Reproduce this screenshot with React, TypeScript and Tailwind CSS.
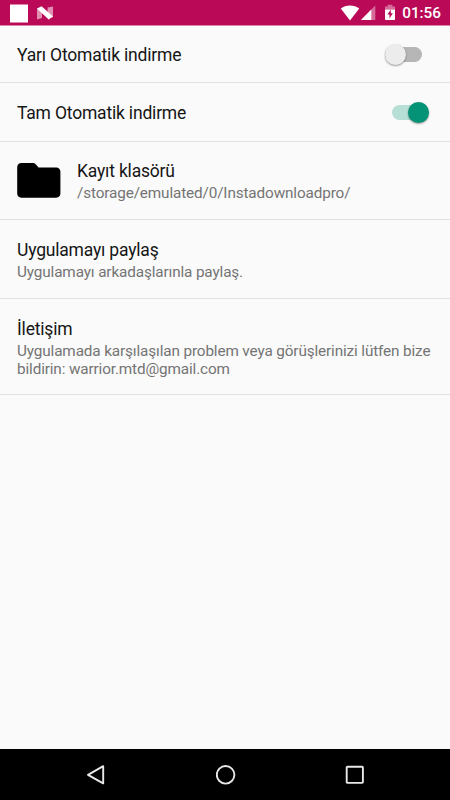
import React, { useState } from 'react';

const StatusBar = () => (
  <header className="flex h-[26px] shrink-0 items-center border-b border-[#dd86ab] bg-[#ba0a57]">
    <div className="ml-[10px] size-[18px] translate-y-[0.5px] bg-white" />
    <svg className="ml-[9px] mt-px" width="16" height="14" viewBox="0 0 16 14">
      <path d="M0 2.2 5 5v7L0 13.4ZM16 11.4 10.6 8.6V1.4L16 .4Z" fill="#fff" fillOpacity=".55" />
      <path d="M0 2.4 4.6.2 16 10.4l-4.3 3.2Z" fill="#fff" />
    </svg>
    <div className="ml-auto mr-[9px] flex items-center">
      <svg className="mt-px" width="20" height="16" viewBox="0 0 20 16">
        <path d="M.8 3.4C5.8-.5 14.2-.5 19.2 3.4L10 15.4Z" fill="#fff" />
      </svg>
      <svg className="mt-px" width="16" height="16" viewBox="0 0 16 16">
        <path d="M1 15 15.3.5V15Z" fill="#fff" fillOpacity=".4" />
        <path d="M1 15 11.3 4.6V15Z" fill="#fff" />
      </svg>
      <svg className="ml-[8px] mt-px" width="12" height="17" viewBox="0 0 12 17">
        <path d="M1 5.5V2.4h2.6V.8h4.8v1.6H11v3.1Z" fill="#fff" fillOpacity=".4" />
        <path
          d="M1 5.5h10v9.7a.8.8 0 0 1-.8.8H1.8a.8.8 0 0 1-.8-.8ZM6.8 5.4 3.4 10.5h2.1v4L8.8 9.2h-2Z"
          fill="#fff"
          fillRule="evenodd"
        />
      </svg>
      <span className="ml-[6px] mt-[3px] text-[15.3px] leading-none font-medium text-white">01:56</span>
    </div>
  </header>
);

const Toggle = ({ checked, onChange }: { checked: boolean; onChange: () => void }) => (
  <button
    type="button"
    role="switch"
    aria-checked={checked}
    onClick={onChange}
    className={`flex h-[15px] w-[37px] shrink-0 items-center rounded-full ${
      checked ? 'justify-end bg-[#b7dfd5]' : 'bg-[#b6b6b6]'
    }`}
  >
    <span
      className={`size-[21px] shrink-0 rounded-full shadow-[0_1px_2px_rgba(0,0,0,0.4)] ${
        checked ? 'bg-[#059378]' : 'bg-[#ececec]'
      }`}
    />
  </button>
);

const Title = ({ children }: { children: React.ReactNode }) => (
  <h2 className="text-[17.5px] leading-[22px] tracking-[-0.19px] text-[#151515]">{children}</h2>
);

const Summary = ({ children }: { children: React.ReactNode }) => (
  <p className="mt-[2px] text-[15.3px] leading-[18px] tracking-[-0.13px] text-[#747474]">{children}</p>
);

const App = () => {
  const [semiAuto, setSemiAuto] = useState(false);
  const [fullAuto, setFullAuto] = useState(true);

  return (
    <div className="flex h-[800px] w-[450px] flex-col overflow-hidden bg-[#fafafa] font-['Roboto',sans-serif]">
      <StatusBar />

      <main className="flex-1">
        <div className="flex h-[57px] items-center justify-between border-b border-[#e0e0e0] pl-[17px] pr-[28px] pt-px">
          <Title>Yarı Otomatik indirme</Title>
          <Toggle checked={semiAuto} onChange={() => setSemiAuto(!semiAuto)} />
        </div>

        <div className="flex h-[59px] items-center justify-between border-b border-[#e0e0e0] pl-[17px] pr-[21px] pt-px">
          <Title>Tam Otomatik indirme</Title>
          <Toggle checked={fullAuto} onChange={() => setFullAuto(!fullAuto)} />
        </div>

        <div className="flex h-[78px] items-center border-b border-[#e0e0e0] pl-[17px]">
          <svg width="44" height="35" viewBox="0 0 44 35">
            <path
              d="M4.4 0h11.3c1.2 0 1.9.3 2.7 1.1l3.2 3.3h17.6c2.5 0 4.2 1.7 4.2 4.2v22c0 2.5-1.7 4.1-4.2 4.1H4.4C1.9 34.7.2 33 .2 30.6V4.2C.2 1.7 1.9 0 4.4 0Z"
              fill="#000"
            />
          </svg>
          <div className="ml-4">
            <Title>Kayıt klasörü</Title>
            <Summary>/storage/emulated/0/Instadownloadpro/</Summary>
          </div>
        </div>

        <div className="h-[79px] border-b border-[#e0e0e0] px-[17px] pt-[19px]">
          <Title>Uygulamayı paylaş</Title>
          <Summary>Uygulamayı arkadaşlarınla paylaş.</Summary>
        </div>

        <div className="h-24 border-b border-[#e0e0e0] px-[17px] pt-[19px]">
          <Title>İletişim</Title>
          <Summary>
            Uygulamada karşılaşılan problem veya görüşlerinizi lütfen bize bildirin: warrior.mtd@gmail.com
          </Summary>
        </div>
      </main>

      <nav className="flex h-[51px] shrink-0 items-center justify-between bg-black pl-[86px] pr-[85px]">
        <svg width="20" height="22" viewBox="0 0 20 22" fill="none" stroke="#e8e8e8" strokeWidth="1.9">
          <path d="M17.2 2.2v17.2L2 10.8Z" strokeLinejoin="round" />
        </svg>
        <svg width="20" height="20" viewBox="0 0 20 20" fill="none" stroke="#e8e8e8" strokeWidth="1.9">
          <circle cx="9.6" cy="9.8" r="8.8" />
        </svg>
        <svg width="20" height="20" viewBox="0 0 20 20" fill="none" stroke="#e8e8e8" strokeWidth="1.9">
          <rect x="1.7" y="1.7" width="16.2" height="16.2" rx=".8" />
        </svg>
      </nav>
    </div>
  );
};

export default App;
